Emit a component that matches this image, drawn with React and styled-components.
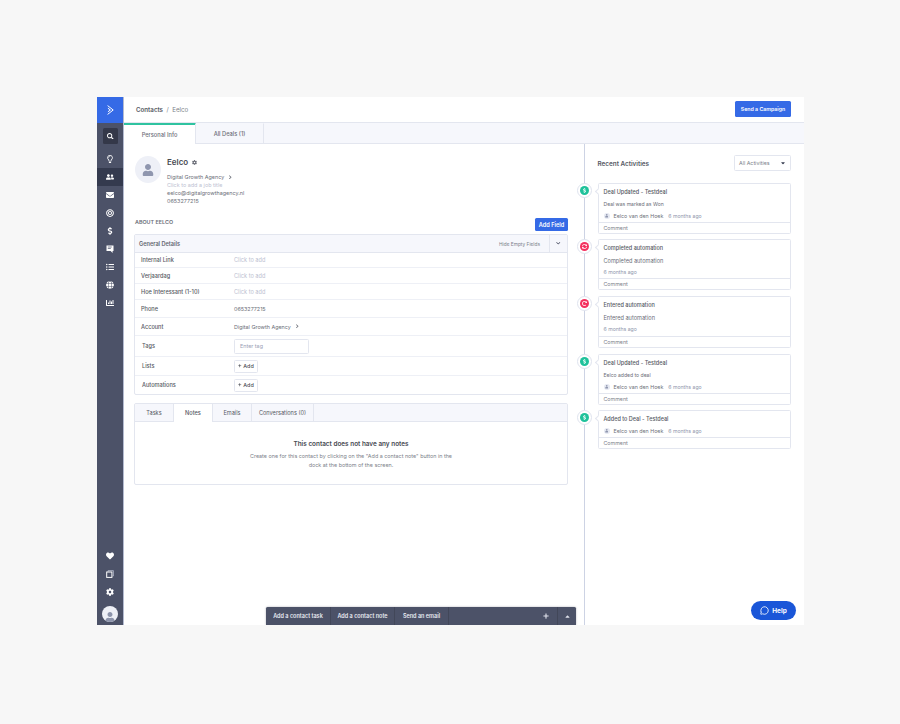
import React from "react";
import styled, { createGlobalStyle } from "styled-components";
import { FaSearch, FaHeart, FaCog, FaDollarSign, FaGlobe, FaEnvelope, FaUserFriends, FaListUl, FaChevronDown, FaCaretUp, FaCaretDown, FaPlus, FaUser, FaRegLightbulb, FaChartBar, FaBullseye, FaChevronRight, FaRedoAlt, FaSyncAlt } from "react-icons/fa";
import { MessageCircle } from "lucide-react";

const Global = createGlobalStyle`
  html, body { margin: 0; padding: 0; background: #f7f7f7; }
  * { box-sizing: border-box; }
  body { font-family: "Inter", "Noto Sans", sans-serif; color: #4c5268; }
`;

const Page = styled.div`width:900px;height:724px;padding:97px 96px 99px 97px;`;
const Frame = styled.div`position:relative;display:flex;width:707px;height:528px;background:#fff;overflow:hidden;`;

const Rail = styled.nav`width:27px;flex:none;display:flex;flex-direction:column;background:#4c5268;border-right:1px solid #b4bbd0;`;
const Logo = styled.div`height:26px;flex:none;background:#356ae6;display:flex;align-items:center;justify-content:center;`;
const RailItems = styled.div`flex:1;display:flex;flex-direction:column;align-items:stretch;padding-top:5px;`;
const RailItem = styled.div`height:18px;flex:none;display:flex;align-items:center;justify-content:center;color:#fff;font-size:8px;
  background:${p=>p.$active?"#343a4e":"transparent"};`;
const SearchBox = styled.div`width:15px;height:16px;margin:0 0 6px 6px;border-radius:1.5px;background:#343849;color:#fff;display:flex;align-items:center;justify-content:center;font-size:6.5px;`;
const Spacer = styled.div`flex:1;`;
const UserCircle = styled.div`width:16px;height:16px;border-radius:50%;background:#eef0f6;color:#8d94ab;display:flex;align-items:flex-end;justify-content:center;font-size:10px;overflow:hidden;margin:5px 0 3px 5px;`;

const Body = styled.div`flex:1;min-width:0;display:flex;flex-direction:column;`;
const Header = styled.header`height:26px;flex:none;display:flex;align-items:center;justify-content:space-between;padding:0 13px 1px 12px;border-bottom:1px solid #e3e6ef;`;
const Crumbs = styled.div`font-size:6.2px;color:#7c7f8a;`;
const CrumbStrong = styled.span`font-weight:600;color:#565963;`;
const PrimaryBtn = styled.button`border:0;border-radius:1.5px;background:#356ae6;color:#fff;font:600 ${p=>p.$f}px "Inter",sans-serif;padding:0;height:${p=>p.$h}px;width:${p=>p.$w}px;`;

const Columns = styled.div`flex:1;display:flex;min-height:0;`;
const Main = styled.main`width:460px;flex:none;display:flex;flex-direction:column;`;
const PageTabs = styled.div`display:flex;height:21px;background:#f6f7fc;border-bottom:1px solid #e3e6ef;margin-right:-220px;flex:none;`;
const PageTab = styled.div`width:${p=>p.$w}px;display:flex;align-items:center;justify-content:center;font-size:5.7px;font-weight:500;color:#6b6e78;
  background:${p=>p.$on?"#fff":"transparent"};margin-bottom:${p=>p.$on?"-1px":"0"};border-right:1px solid #e3e6ef;
  border-top:1px solid ${p=>p.$on?"#2fc3a0":"transparent"};box-shadow:${p=>p.$on?"inset 0 1px 0 #2fc3a0":"none"};`;
const Content = styled.div`flex:1;padding:12px 16px 0 10px;`;

const Profile = styled.section`display:flex;gap:6px;height:62px;padding-left:1px;`;
const Avatar = styled.div`width:26px;height:27px;border-radius:50%;background:#eef0f7;color:#8f96ae;display:flex;align-items:center;justify-content:center;font-size:12px;flex:none;`;
const Info = styled.div`display:flex;flex-direction:column;`;
const Name = styled.div`font-size:8px;font-weight:600;color:#484a52;height:12px;margin-bottom:5px;display:flex;align-items:center;gap:4px;svg{color:#6b6e78;}`;
const Line = styled.div`font-size:5.45px;line-height:8px;color:${p=>p.$muted?"#bcc1d1":"#6b6e78"};display:flex;align-items:center;gap:4px;`;

const AboutRow = styled.div`display:flex;justify-content:space-between;align-items:flex-start;height:16px;padding-left:1px;`;
const About = styled.div`font-size:5.4px;font-weight:600;color:#6b6e78;padding-top:1px;`;

const Card = styled.section`border:1px solid #e3e6ef;border-radius:2px;`;
const DetailsCard = styled(Card)`margin-bottom:8px;`;
const CardHead = styled.div`height:18px;display:flex;align-items:center;background:#f6f7fc;border-bottom:1px solid #e3e6ef;padding-left:4px;`;
const CardTitle = styled.div`flex:1;font-size:5.6px;font-weight:600;color:#62656f;`;
const HideLink = styled.div`font-size:4.8px;color:#7c7f8a;padding-right:9px;`;
const CollapseBtn = styled.div`width:18px;height:100%;border-left:1px solid #e3e6ef;display:flex;align-items:center;justify-content:center;font-size:4.5px;color:#40455a;`;
const Row = styled.div`height:${p=>p.$h}px;display:grid;grid-template-columns:${p=>p.$wide?"92px":"93px"} 1fr;align-items:center;padding-left:${p=>p.$wide?"7px":"6px"};border-bottom:${p=>p.$last?"0":"1px solid #eef0f6"};`;
const RowLabel = styled.div`font-size:5.6px;font-weight:500;color:#565963;`;
const Muted = styled.div`font-size:5.6px;color:#bcc1d1;`;
const Value = styled.div`font-size:5.4px;color:#6b6e78;display:flex;align-items:center;gap:4px;`;
const TagInput = styled.div`width:75px;height:15px;border:1px solid #e3e6ef;border-radius:1.5px;font-size:5.4px;color:#9aa0b5;display:flex;align-items:center;padding-left:5px;`;
const AddBtn = styled.div`width:24px;height:13px;border:1px solid #e3e6ef;border-radius:1.5px;font-size:5.4px;font-weight:500;color:#484a52;display:flex;align-items:center;justify-content:center;gap:1.5px;`;

const SubTabs = styled.div`display:flex;height:18px;background:#f6f7fc;border-bottom:1px solid #e3e6ef;border-radius:2px 2px 0 0;`;
const SubTab = styled.div`width:${p=>p.$w}px;display:flex;align-items:center;justify-content:center;font-size:5.6px;color:#565963;font-weight:${p=>p.$on?500:400};
  background:${p=>p.$on?"#fff":"transparent"};margin-bottom:${p=>p.$on?"-1px":"0"};border-right:1px solid #e3e6ef;`;
const Empty = styled.div`height:62px;padding-top:18px;display:flex;flex-direction:column;align-items:center;text-align:center;`;
const EmptyTitle = styled.div`font-size:6.4px;font-weight:600;color:#484a52;margin-bottom:4px;`;
const EmptyText = styled.div`font-size:5.4px;line-height:8.5px;color:#7c7f8a;width:210px;`;

const Side = styled.aside`position:relative;flex:1;border-left:1.5px solid #cdd3e4;padding:32px 13px 0 12.5px;background:#fff;margin-top:21px;`;
const SideHead = styled.div`display:flex;justify-content:space-between;align-items:center;height:16px;margin:-21px 0 12px;`;
const SideTitle = styled.div`font-size:6.35px;font-weight:600;color:#565963;padding-top:1px;`;
const Select = styled.div`width:57px;height:16px;border:1px solid #e3e6ef;border-radius:1.5px;display:flex;align-items:center;justify-content:space-between;padding:0 4px;font-size:5.3px;color:#7c7f8a;svg{color:#343a4e;}`;
const Feed = styled.div`display:flex;flex-direction:column;`;
const Activity = styled.article`position:relative;height:${p=>p.$h}px;margin-bottom:${p=>p.$gap}px;border:1px solid #e3e6ef;border-radius:1.5px;display:flex;flex-direction:column;
  &::before{content:"";position:absolute;left:-3px;top:5px;width:4px;height:4px;background:#fff;border-left:1px solid #e3e6ef;border-bottom:1px solid #e3e6ef;transform:rotate(45deg);}`;
const Dot = styled.div`position:absolute;left:-21.5px;top:-1px;width:15px;height:15px;border-radius:50%;background:#fff;border:1px solid #dfe3ee;display:flex;align-items:center;justify-content:center;`;
const DotInner = styled.div`width:9px;height:9px;border-radius:50%;background:${p=>p.$c};color:#fff;display:flex;align-items:center;justify-content:center;font-size:5px;`;
const ActivityMain = styled.div`flex:1;padding:4px 5px 0;display:flex;flex-direction:column;gap:4px;`;
const ActivityTitle = styled.div`font-size:5.5px;line-height:9px;color:#565963;font-weight:500;margin-bottom:-1px;`;
const ActivityText = styled.div`font-size:${p=>p.$big?5.6:5.05}px;line-height:8px;color:#6b6e78;margin:${p=>p.$big?"1px 0 -1px":"0"};`;
const Meta = styled.div`display:flex;align-items:center;font-size:5.3px;line-height:8px;color:#6b6e78;`;
const MetaAvatar = styled.span`width:6px;height:6px;border-radius:50%;background:#e6e9f2;color:#8f96ae;font-size:3.5px;display:inline-flex;align-items:center;justify-content:center;margin-right:4px;`;
const Time = styled.span`color:#8f95ac;font-size:5.15px;margin-left:${p=>p.$solo?0:5}px;`;
const Comment = styled.div`height:11px;border-top:1px solid #e3e6ef;padding-left:5px;font-size:5.3px;line-height:10px;color:#7c7f8a;flex:none;`;

const Dock = styled.div`position:absolute;left:169px;bottom:0;width:310px;height:18px;background:#4c5268;border-radius:1.5px 1.5px 0 0;display:flex;align-items:stretch;box-shadow:0 0 2px rgba(40,45,60,.4);`;
const DockBtn = styled.div`width:${p=>p.$w}px;display:flex;align-items:center;justify-content:center;font-size:5.5px;font-weight:600;color:#e8eaf2;border-right:1px solid #424759;`;
const DockPlus = styled.div`width:18px;padding-right:4px;display:flex;align-items:center;justify-content:center;color:#dfe2ec;font-size:6px;`;
const DockCaret = styled.div`width:19px;display:flex;align-items:center;justify-content:center;color:#dfe2ec;font-size:7px;border-left:1px solid #424759;`;
const Help = styled.div`position:absolute;right:8px;bottom:5px;width:45px;height:19px;border-radius:10px;background:#1a56d8;color:#fff;display:flex;align-items:center;justify-content:center;gap:3px;font-size:6.4px;font-weight:700;`;

const chevron = <FaChevronRight size={4.5} />;
const activities = [
  { c:"#1fc29b", h:51, gap:5, icon:<FaDollarSign/>, title:"Deal Updated - Testdeal", text:"Deal was marked as Won", who:true },
  { c:"#f4325f", h:51, gap:6, icon:<FaSyncAlt/>, title:"Completed automation", text:"Completed automation", big:true },
  { c:"#f4325f", h:52, gap:6, icon:<FaRedoAlt/>, title:"Entered automation", text:"Entered automation", big:true },
  { c:"#1fc29b", h:51, gap:5, icon:<FaDollarSign/>, title:"Deal Updated - Testdeal", text:"Eelco added to deal", who:true },
  { c:"#1fc29b", h:39, gap:0, icon:<FaDollarSign/>, title:"Added to Deal - Testdeal", who:true },
];

const ChatIcon = () => (
  <svg width="8" height="8" viewBox="0 0 8 8"><path d="M.5.5h7v5.6H6.6V8L4.6 6.1H.5z" fill="#fff"/><path d="M1.8 2h4M1.8 3.5h3" stroke="#4c5268" strokeWidth=".7"/></svg>
);
const CopyIcon = () => (
  <svg width="8" height="8" viewBox="0 0 8 8" fill="none"><path d="M2 1.6V.6h5.4V6H6.4" stroke="#a9afc2" strokeWidth=".9"/><rect x=".7" y="2" width="5.2" height="5.4" stroke="#fff" strokeWidth="1"/></svg>
);

export default function App() {
  return (
    <Page>
      <Global />
      <Frame>
        <Rail>
          <Logo>
            <svg width="7" height="10" viewBox="0 0 7 10"><path d="M.6.6 6.2 5 .6 9.4M.9 3.2 3.4 5 .9 6.8" fill="none" stroke="#fff" strokeWidth="1"/></svg>
          </Logo>
          <RailItems>
            <SearchBox><FaSearch /></SearchBox>
            <RailItem><FaRegLightbulb /></RailItem>
            <RailItem $active><FaUserFriends /></RailItem>
            <RailItem><FaEnvelope /></RailItem>
            <RailItem><FaBullseye /></RailItem>
            <RailItem><FaDollarSign /></RailItem>
            <RailItem><ChatIcon /></RailItem>
            <RailItem><FaListUl /></RailItem>
            <RailItem><FaGlobe /></RailItem>
            <RailItem><FaChartBar /></RailItem>
            <Spacer />
            <RailItem><FaHeart /></RailItem>
            <RailItem><CopyIcon /></RailItem>
            <RailItem><FaCog /></RailItem>
            <UserCircle><FaUser /></UserCircle>
          </RailItems>
        </Rail>
        <Body>
          <Header>
            <Crumbs><CrumbStrong>Contacts</CrumbStrong> &nbsp;/&nbsp; Eelco</Crumbs>
            <PrimaryBtn $w={56} $h={16} $f={5.25}>Send a Campaign</PrimaryBtn>
          </Header>
          <Columns>
            <Main>
              <PageTabs>
                <PageTab $on $w={72}>Personal Info</PageTab>
                <PageTab $w={68}>All Deals (1)</PageTab>
              </PageTabs>
              <Content>
                <Profile>
                  <Avatar><FaUser /></Avatar>
                  <Info>
                    <Name>Eelco <FaCog size={5} /></Name>
                    <Line>Digital Growth Agency {chevron}</Line>
                    <Line $muted>Click to add a job title</Line>
                    <Line>eelco@digitalgrowthagency.nl</Line>
                    <Line>0653277215</Line>
                  </Info>
                </Profile>
                <AboutRow>
                  <About>ABOUT EELCO</About>
                  <PrimaryBtn $w={33} $h={13} $f={5.6}>Add Field</PrimaryBtn>
                </AboutRow>
                <DetailsCard>
                  <CardHead>
                    <CardTitle>General Details</CardTitle>
                    <HideLink>Hide Empty Fields</HideLink>
                    <CollapseBtn><FaChevronDown /></CollapseBtn>
                  </CardHead>
                  <Row $h={15}><RowLabel>Internal Link</RowLabel><Muted>Click to add</Muted></Row>
                  <Row $h={16}><RowLabel>Verjaardag</RowLabel><Muted>Click to add</Muted></Row>
                  <Row $h={16}><RowLabel>Hoe Interessant (1-10)</RowLabel><Muted>Click to add</Muted></Row>
                  <Row $h={18}><RowLabel>Phone</RowLabel><Value>0653277215</Value></Row>
                  <Row $h={18}><RowLabel>Account</RowLabel><Value>Digital Growth Agency {chevron}</Value></Row>
                  <Row $h={21} $wide><RowLabel>Tags</RowLabel><TagInput>Enter tag</TagInput></Row>
                  <Row $h={19} $wide><RowLabel>Lists</RowLabel><AddBtn><FaPlus size={3.5}/>Add</AddBtn></Row>
                  <Row $h={18} $wide $last><RowLabel>Automations</RowLabel><AddBtn><FaPlus size={3.5}/>Add</AddBtn></Row>
                </DetailsCard>
                <Card>
                  <SubTabs>
                    <SubTab $w={39}>Tasks</SubTab>
                    <SubTab $on $w={39}>Notes</SubTab>
                    <SubTab $w={39}>Emails</SubTab>
                    <SubTab $w={62}>Conversations (0)</SubTab>
                  </SubTabs>
                  <Empty>
                    <EmptyTitle>This contact does not have any notes</EmptyTitle>
                    <EmptyText>Create one for this contact by clicking on the "Add a contact note" button in the dock at the bottom of the screen.</EmptyText>
                  </Empty>
                </Card>
              </Content>
            </Main>
            <Side>
              <SideHead>
                <SideTitle>Recent Activities</SideTitle>
                <Select>All Activities <FaCaretDown size={6} /></Select>
              </SideHead>
              <Feed>
                {activities.map((a,i)=>(
                  <Activity key={i} $h={a.h} $gap={a.gap}>
                    <Dot><DotInner $c={a.c}>{a.icon}</DotInner></Dot>
                    <ActivityMain>
                      <ActivityTitle>{a.title}</ActivityTitle>
                      {a.text && <ActivityText $big={a.big}>{a.text}</ActivityText>}
                      {a.who
                        ? <Meta><MetaAvatar><FaUser/></MetaAvatar>Eelco van den Hoek <Time>6 months ago</Time></Meta>
                        : <Meta><Time $solo>6 months ago</Time></Meta>}
                    </ActivityMain>
                    <Comment>Comment</Comment>
                  </Activity>
                ))}
              </Feed>
            </Side>
          </Columns>
        </Body>
        <Dock>
          <DockBtn $w={65}>Add a contact task</DockBtn>
          <DockBtn $w={64}>Add a contact note</DockBtn>
          <DockBtn $w={54}>Send an email</DockBtn>
          <Spacer />
          <DockPlus><FaPlus /></DockPlus>
          <DockCaret><FaCaretUp /></DockCaret>
        </Dock>
        <Help><MessageCircle size={9} strokeWidth={2.2} />Help</Help>
      </Frame>
    </Page>
  );
}
